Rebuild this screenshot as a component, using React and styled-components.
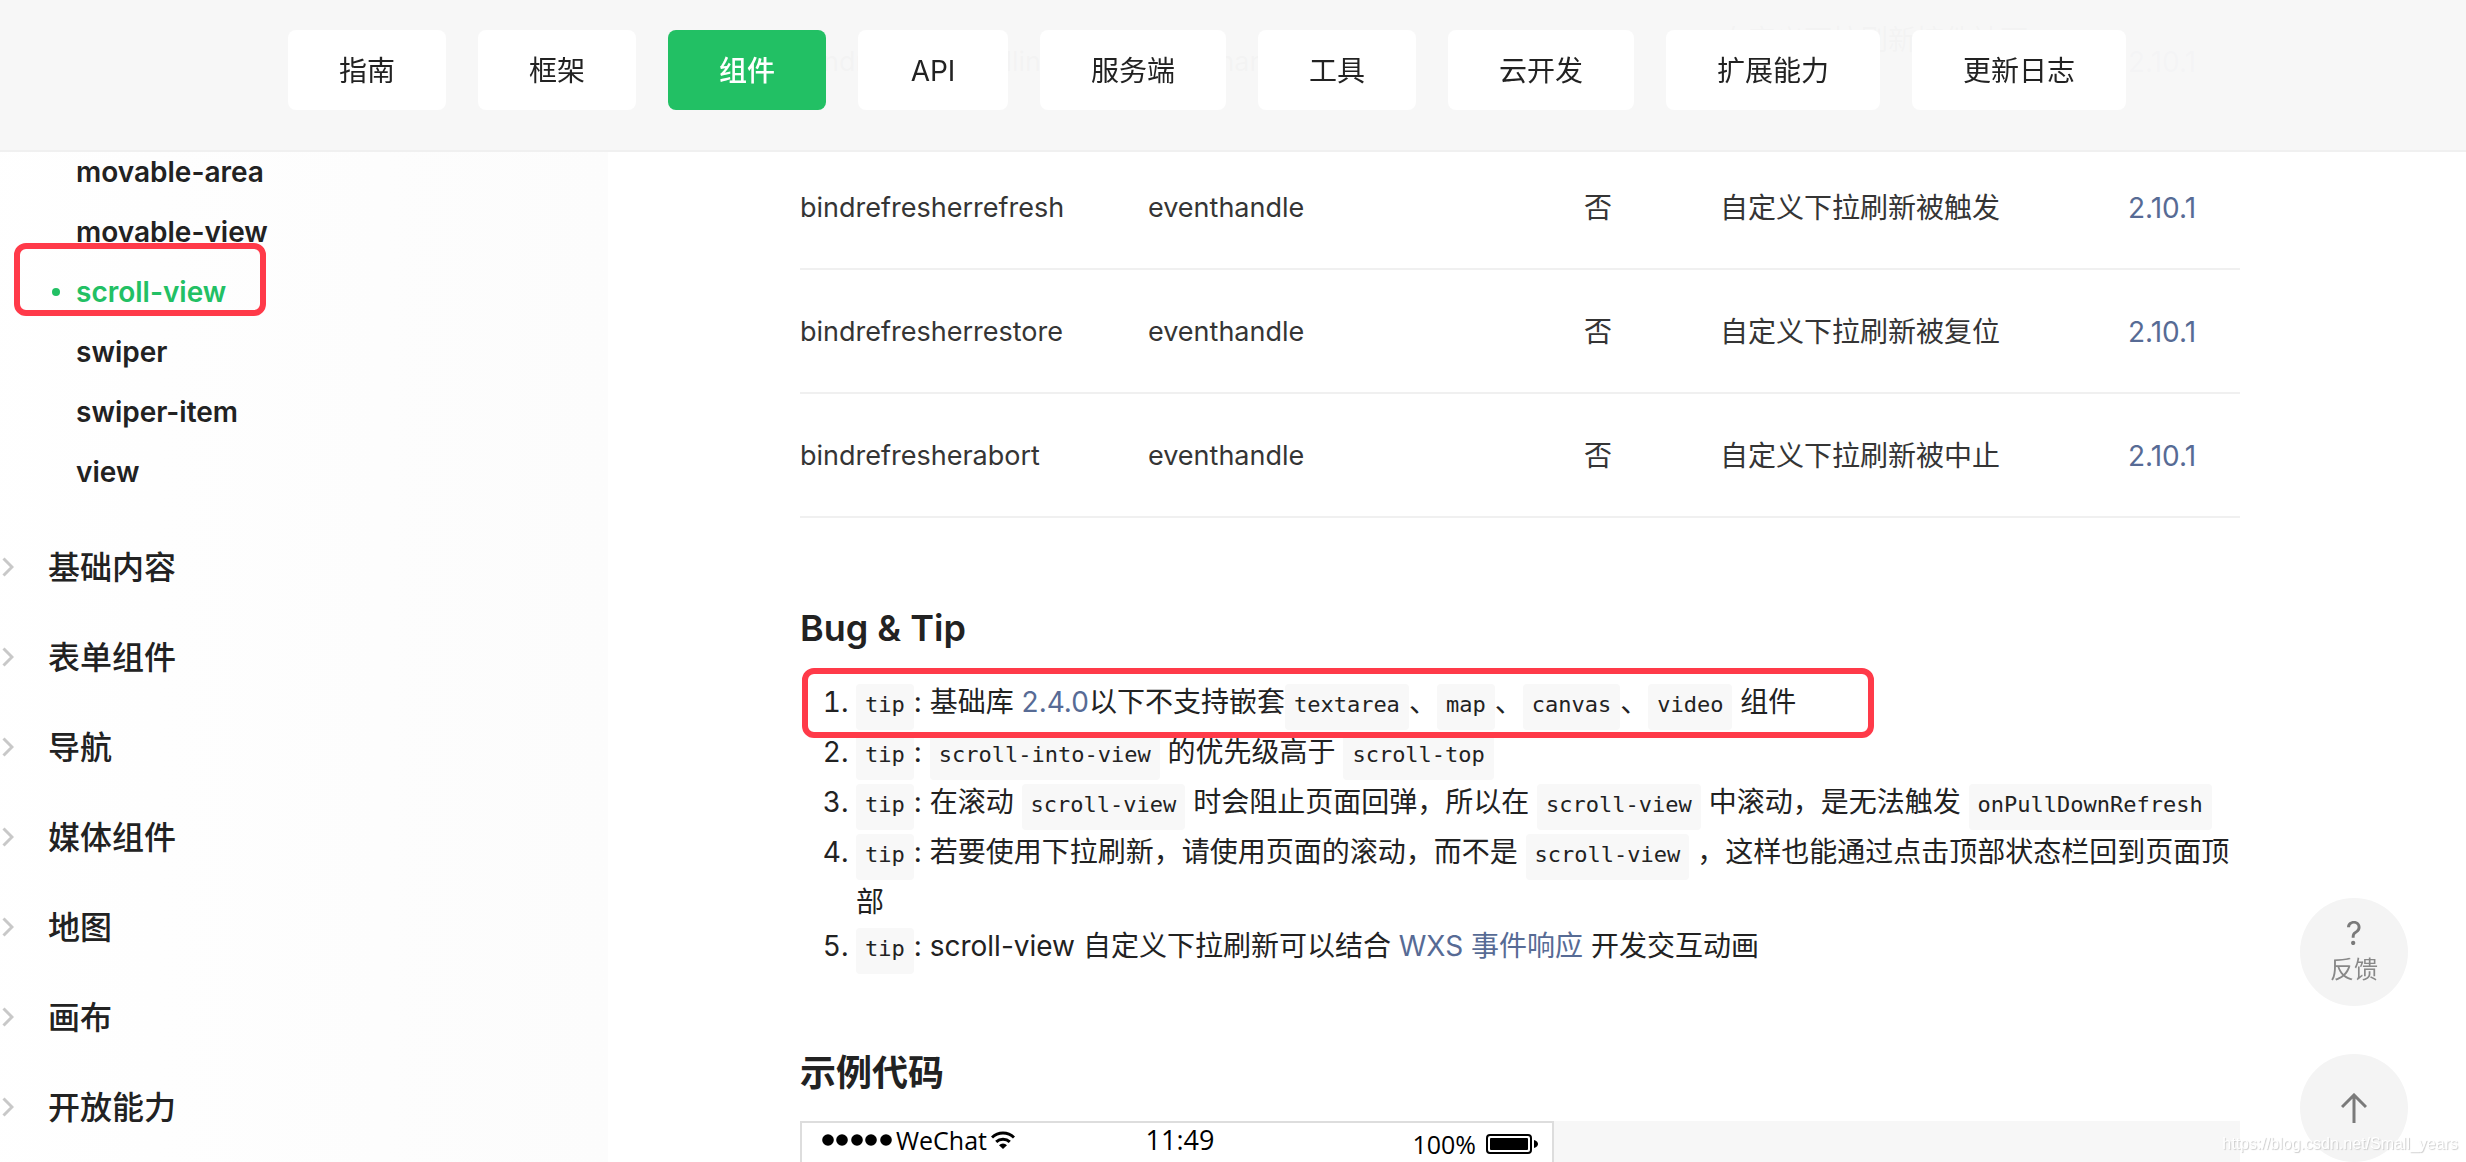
import React from 'react'

import styled, { createGlobalStyle } from 'styled-components'

const tabs = [
   '指南',
   '框架',
   '组件',
   'API',
   '服务端',
   '工具',
   '云开发',
   '扩展能力',
   '更新日志',
]

const containerItems = [
   'movable-area',
   'movable-view',
   'scroll-view',
   'swiper',
   'swiper-item',
   'view',
]

const groups = [
   '基础内容',
   '表单组件',
   '导航',
   '媒体组件',
   '地图',
   '画布',
   '开放能力',
]

const events = [
   { name: 'bindrefresherpulling', text: '自定义下拉刷新控件被下拉' },
   { name: 'bindrefresherrefresh', text: '自定义下拉刷新被触发' },
   { name: 'bindrefresherrestore', text: '自定义下拉刷新被复位' },
   { name: 'bindrefresherabort', text: '自定义下拉刷新被中止' },
]

const App = () => {
   return (
      <>
         <GlobalStyle />
         <Header>
            <Nav>
               {tabs.map((tab) => (
                  <Tab key={tab} href="#" $active={tab === '组件'}>
                     {tab}
                  </Tab>
               ))}
            </Nav>
         </Header>

         <Page>
            <Sidebar>
               <SubList>
                  {containerItems.map((item) => {
                     const active = item === 'scroll-view'
                     return (
                        <SubItem key={item}>
                           {active && <Bullet />}
                           <SubLink href="#" $active={active}>
                              {item}
                           </SubLink>
                           {active && <SideMark />}
                        </SubItem>
                     )
                  })}
               </SubList>
               {groups.map((group) => (
                  <Group key={group} type="button">
                     <Chevron viewBox="0 0 12 20">
                        <path d="M1.5 1.5L10 10L1.5 18.5" />
                     </Chevron>
                     <GroupName>{group}</GroupName>
                  </Group>
               ))}
            </Sidebar>

            <Content>
               <Table>
                  <colgroup>
                     <Col $width={348} />
                     <Col $width={436} />
                     <Col $width={136} />
                     <Col $width={408} />
                     <Col $width={112} />
                  </colgroup>
                  <tbody>
                     {events.map((event) => (
                        <tr key={event.name}>
                           <NameCell>{event.name}</NameCell>
                           <NameCell>eventhandle</NameCell>
                           <Cell>否</Cell>
                           <Cell $gap>{event.text}</Cell>
                           <Cell>
                              <DocLink href="#">2.10.1</DocLink>
                           </Cell>
                        </tr>
                     ))}
                  </tbody>
               </Table>

               <Heading>Bug &amp; Tip</Heading>
               <Tips>
                  <Tip>
                     <Code>tip</Code>: 基础库 <DocLink href="#">2.4.0</DocLink>
                     以下不支持嵌套<Code>textarea</Code>、<Code>map</Code>、
                     <Code>canvas</Code>、<Code>video</Code> 组件
                     <TipMark />
                  </Tip>
                  <Tip>
                     <Code>tip</Code>: <Code>scroll-into-view</Code>{' '}
                     的优先级高于 <Code>scroll-top</Code>
                  </Tip>
                  <Tip>
                     <Code>tip</Code>: 在滚动 <Code>scroll-view</Code>{' '}
                     时会阻止页面回弹，所以在 <Code>scroll-view</Code>{' '}
                     中滚动，是无法触发 <Code>onPullDownRefresh</Code>
                  </Tip>
                  <Tip>
                     <Code>tip</Code>:
                     若要使用下拉刷新，请使用页面的滚动，而不是{' '}
                     <Code>scroll-view</Code>{' '}
                     ，这样也能通过点击顶部状态栏回到页面顶部
                  </Tip>
                  <Tip>
                     <Code>tip</Code>: scroll-view 自定义下拉刷新可以结合{' '}
                     <DocLink href="#">WXS 事件响应</DocLink> 开发交互动画
                  </Tip>
               </Tips>

               <Heading>示例代码</Heading>
               <Demo>
                  <Phone>
                     <StatusBar>
                        <Carrier>
                           <Signal viewBox="0 0 70 12">
                              {[6, 20, 35, 49, 64].map((cx) => (
                                 <circle key={cx} cx={cx} cy="6" r="5.8" />
                              ))}
                           </Signal>
                           WeChat
                           <Wifi viewBox="0 0 24 18">
                              <path d="M1 6.5A16 16 0 0 1 23 6.5" />
                              <path d="M5.2 10.8A10 10 0 0 1 18.8 10.8" />
                              <path
                                 d="M12 18L8 14.2A5.6 5.6 0 0 1 16 14.2Z"
                                 fill="#000"
                                 stroke="none"
                              />
                           </Wifi>
                        </Carrier>
                        <Time>11:49</Time>
                        <Power>
                           100%
                           <Battery viewBox="0 0 52 20">
                              <rect
                                 x="1"
                                 y="1"
                                 width="44"
                                 height="18"
                                 rx="3"
                                 fill="none"
                                 stroke="#000"
                                 strokeWidth="2"
                              />
                              <rect x="4" y="4" width="38" height="12" rx="1" />
                              <path d="M48 6C51 7 52 8.500 52 10C52 11.500 51 13 48 14Z" />
                           </Battery>
                        </Power>
                     </StatusBar>
                  </Phone>
               </Demo>
            </Content>
         </Page>

         <FloatBar>
            <RoundButton type="button">
               <Question>?</Question>
               反馈
            </RoundButton>
            <RoundButton type="button" aria-label="回到顶部">
               <ArrowUp viewBox="0 0 26 30">
                  <path d="M13 30V2M1 14L13 2L25 14" />
               </ArrowUp>
            </RoundButton>
         </FloatBar>
         <Watermark>https://blog.csdn.net/Small_years</Watermark>
      </>
   )
}

export default App

const GlobalStyle = createGlobalStyle`
   * {
      box-sizing: border-box;
   }
   body {
      margin: 0;
      height: 100vh;
      overflow: hidden;
      background: #fff;
      color: #222;
      font-family: 'Inter', 'Noto Sans CJK SC', sans-serif;
      font-size: 28px;
      line-height: 44px;
   }
   a {
      text-decoration: none;
   }
   button {
      border: none;
      font-family: inherit;
      cursor: pointer;
   }
`
const Header = styled.header`
   position: fixed;
   top: 0;
   left: 0;
   right: 0;
   z-index: 10;
   padding: 30px 288px 40px;
   background: rgba(247, 247, 247, 0.98);
   border-bottom: 2px solid #f0f0f0;
`
const Nav = styled.nav`
   display: flex;
   gap: 32px;
`
const Tab = styled.a`
   min-width: 150px;
   padding: 19px 51px 17px;
   border-radius: 8px;
   text-align: center;
   white-space: nowrap;
   font-weight: ${(props) => (props.$active ? 500 : 400)};
   color: ${(props) => (props.$active ? '#fff' : '#222')};
   background: ${(props) => (props.$active ? '#22c064' : '#fff')};
`
const Page = styled.div`
   display: flex;
   height: 100vh;
   overflow: hidden;
`
const Sidebar = styled.aside`
   flex: 0 0 608px;
   padding-top: 142px;
   background: linear-gradient(90deg, #fff -70px, #fcfcfc);
`
const SubList = styled.ul`
   margin: 0 0 20px;
   padding: 0;
   list-style: none;
`
const SubItem = styled.li`
   position: relative;
   display: flex;
   align-items: center;
   height: 60px;
   padding-left: 76px;
`
const SubLink = styled.a`
   font-weight: 600;
   color: ${(props) => (props.$active ? '#22c064' : '#222')};
`
const Bullet = styled.span`
   position: absolute;
   left: 52px;
   width: 8px;
   height: 8px;
   border-radius: 50%;
   background: #22c064;
`
const Mark = styled.span`
   position: absolute;
   z-index: 1;
   border: 6px solid #ff3a49;
   border-radius: 12px;
   pointer-events: none;
`
const SideMark = styled(Mark)`
   top: -19px;
   left: 14px;
   width: 252px;
   height: 73px;
`
const TipMark = styled(Mark)`
   top: -12px;
   left: -54px;
   width: 1072px;
   height: 70px;
`
const Group = styled.button`
   display: flex;
   align-items: center;
   gap: 34px;
   width: 100%;
   height: 90px;
   padding: 0 2px;
   background: none;
   font-size: 32px;
   font-weight: 500;
   color: #222;
`
const GroupName = styled.span`
   padding-bottom: 4px;
`
const Chevron = styled.svg`
   width: 12px;
   height: 20px;
   fill: none;
   stroke: #c8c8c8;
   stroke-width: 3;
`
const Content = styled.main`
   flex: 1;
   min-width: 0;
   margin-top: -22px;
   padding: 0 226px 0 192px;
`
const Table = styled.table`
   width: 100%;
   table-layout: fixed;
   border-collapse: collapse;
   color: #353535;
`
const Col = styled.col`
   width: ${(props) => props.$width}px;
`
const Cell = styled.td`
   padding: 40px 0 38px;
   padding-right: ${(props) => (props.$gap ? '80px' : '0')};
   border-bottom: 2px solid #f0f0f0;
`
const NameCell = styled(Cell)`
   font-size: 27px;
`
const DocLink = styled.a`
   color: #576b95;
`
const Heading = styled.h2`
   margin: 75px 0 24px;
   font-size: 36px;
   line-height: 48px;
   font-weight: 600;

   ${Table} + & {
      margin-top: 86px;
   }
`
const Tips = styled.ol`
   margin: 28px 0 0;
   padding-left: 56px;
`
const Tip = styled.li`
   position: relative;
`
const Code = styled.code`
   display: inline-block;
   height: 46px;
   padding: 0 9px;
   border-radius: 4px;
   background: #f8f8f8;
   font-family: 'DejaVu Sans Mono', monospace;
   font-size: 22px;
   line-height: 42px;
`
const Demo = styled.div`
   background: #f7f7f7;
`
const Phone = styled.div`
   width: 754px;
   height: 600px;
   border: 2px solid #ddd;
   background: #fff;
`
const StatusBar = styled.div`
   display: grid;
   grid-template-columns: 1fr auto 1fr;
   align-items: start;
   padding: 0 14px 0 20px;
   font-family: 'Open Sans', sans-serif;
   font-size: 25px;
   line-height: 34px;
   color: #000;
`
const Carrier = styled.div`
   display: flex;
   align-items: center;
   gap: 4px;
`
const Signal = styled.svg`
   width: 70px;
   height: 12px;
`
const Wifi = styled.svg`
   width: 24px;
   height: 18px;
   fill: none;
   stroke: #000;
   stroke-width: 3;
`
const Time = styled.div`
   font-size: 27px;
`
const Power = styled.div`
   display: flex;
   align-items: center;
   justify-content: flex-end;
   gap: 10px;
   padding-top: 4px;
`
const Battery = styled.svg`
   width: 52px;
   height: 20px;
`
const FloatBar = styled.div`
   position: fixed;
   right: 58px;
   bottom: 0;
   display: flex;
   flex-direction: column;
   gap: 48px;
`
const RoundButton = styled.button`
   display: flex;
   flex-direction: column;
   align-items: center;
   justify-content: center;
   width: 108px;
   height: 108px;
   padding: 0;
   border-radius: 50%;
   background: #f4f4f4;
   color: #888;
   font-size: 24px;
   line-height: 36px;
`
const Question = styled.span`
   font-size: 32px;
   color: #7a7a7a;
`
const ArrowUp = styled.svg`
   width: 26px;
   height: 30px;
   fill: none;
   stroke: #7a7a7a;
   stroke-width: 3;
`
const Watermark = styled.div`
   position: fixed;
   right: 8px;
   bottom: 6px;
   font-family: 'Liberation Sans', sans-serif;
   font-size: 16px;
   line-height: 24px;
   color: #fff;
   text-shadow: 1px 1px 1px #ccc;
`
